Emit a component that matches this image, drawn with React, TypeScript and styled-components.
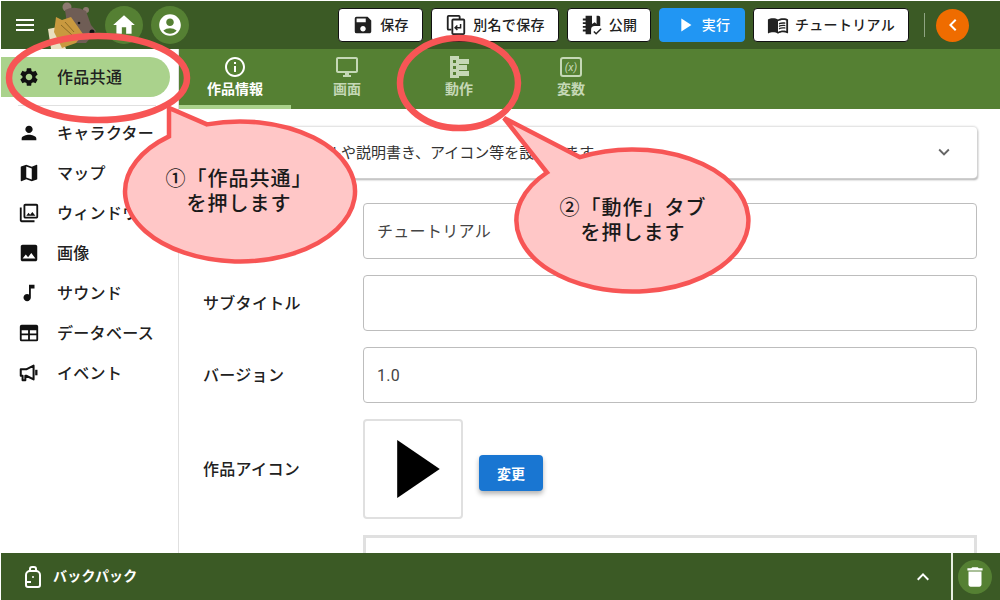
import React from 'react'
import styled, { createGlobalStyle } from 'styled-components'
import {
  MdMenu, MdHome, MdAccountCircle, MdSave, MdSettings, MdPerson, MdMap, MdOutlinePhotoLibrary, MdImage,
  MdMusicNote, MdInfoOutline, MdOutlineDesktopWindows, MdPlayArrow, MdMenuBook, MdChevronLeft,
  MdExpandMore, MdExpandLess, MdDelete,
} from 'react-icons/md'

const GlobalStyle = createGlobalStyle`
  html, body {
    margin: 0;
    background: #fff;
  }
  * {
    box-sizing: border-box;
  }
  body {
    font-family: Roboto, "Noto Sans CJK JP", sans-serif;
    color: #212121;
    overflow: hidden;
  }
`

const Page = styled.div`
  position: relative;
  width: 1000px;
  height: 600px;
  padding: 1px 0 0 1px;
  display: flex;
  flex-direction: column;
  overflow: hidden;
`

const Header = styled.header`
  flex: 0 0 48px;
  background: #3b5a25;
  display: flex;
  align-items: center;
  padding: 0 31px 0 12px;
`

const MenuButton = styled.div`
  display: flex;
  color: #fff;
  font-size: 24px;
  margin-right: 11px;
`

const Logo = styled.svg`
  width: 48px;
  height: 48px;
  margin-right: 9px;
  align-self: flex-end;
`

const RoundButton = styled.div`
  width: 38px;
  height: 38px;
  border-radius: 50%;
  background: #558033;
  color: #fff;
  font-size: 26px;
  display: flex;
  align-items: center;
  justify-content: center;
  margin-right: 8px;
`

const Spacer = styled.div`
  flex: 1;
`

const ToolButton = styled.div<{ $width: number; $primary?: boolean }>`
  width: ${p => p.$width}px;
  height: 34px;
  margin-left: 8px;
  border-radius: 4px;
  border: 1px solid ${p => (p.$primary ? '#2196f3' : '#111')};
  background: ${p => (p.$primary ? '#2196f3' : '#fff')};
  color: ${p => (p.$primary ? '#fff' : '#212121')};
  font-size: 14px;
  font-weight: 500;
  letter-spacing: 0.3px;
  line-height: 18px;
  padding-bottom: 1px;
  display: flex;
  align-items: center;
  justify-content: center;
  gap: 6px;
  white-space: nowrap;

  svg {
    width: 22px;
    height: 22px;
    flex: none;
  }
`

const HeaderDivider = styled.div`
  width: 1px;
  height: 24px;
  background: #8fa582;
  margin: 0 11px 0 15px;
`

const CollapseButton = styled.div`
  width: 33px;
  height: 33px;
  border-radius: 50%;
  background: #ef6c00;
  color: #fff;
  font-size: 24px;
  display: flex;
  align-items: center;
  justify-content: center;
`

const Body = styled.div`
  flex: 1;
  min-height: 0;
  display: flex;
`

const Sidebar = styled.nav`
  flex: 0 0 178px;
  border-right: 1px solid #e0e0e0;
  padding-top: 8px;
`

const NavItem = styled.div<{ $active?: boolean }>`
  width: 169px;
  height: 40px;
  display: flex;
  align-items: center;
  padding: 0 0 2px 17px;
  border-radius: 0 20px 20px 0;
  background: ${p => (p.$active ? '#aad28c' : 'transparent')};
  font-size: 16px;
  font-weight: 500;
  letter-spacing: 0.3px;
  white-space: nowrap;

  svg {
    width: 22px;
    height: 22px;
    color: #111;
    flex: none;
    margin: 2px 17px 0 0;
  }
`

const NavDivider = styled.hr`
  width: 138px;
  margin: 8px 0 7px 17px;
  border: 0;
  border-top: 1px solid #e0e0e0;
`

const Content = styled.main`
  flex: 1;
  min-width: 0;
  overflow: hidden;
`

const TabBar = styled.div`
  height: 60px;
  background: #558033;
  display: flex;
`

const Tab = styled.div<{ $active?: boolean }>`
  width: 112px;
  height: 60px;
  display: flex;
  flex-direction: column;
  align-items: center;
  padding-top: 6px;
  color: ${p => (p.$active ? '#fff' : '#c5d8b6')};
  border-bottom: 4px solid ${p => (p.$active ? '#aad28c' : 'transparent')};
  font-size: 14px;
  font-weight: 700;
  line-height: 18px;

  svg {
    width: 24px;
    height: 24px;
    margin-bottom: 1px;
  }
`

const Form = styled.div`
  padding: 18px 23px 0 11px;
`

const Accordion = styled.div`
  height: 51px;
  border-radius: 4px;
  background: #fff;
  box-shadow: 0 0 2px 1px #dcdcdc, 1px 2px 2px #a8a8a8;
  display: flex;
  align-items: center;
  justify-content: space-between;
  padding: 0 22px 2px 46px;
  font-size: 15px;
  color: #333;
  margin-bottom: 25px;

  svg {
    font-size: 22px;
    color: #666;
  }
`

const FieldRow = styled.div`
  display: flex;
  align-items: center;
  margin-bottom: 16px;
`

const FieldLabel = styled.div`
  flex: 0 0 173px;
  padding: 0 0 3px 13px;
  font-size: 16px;
  font-weight: 500;
  letter-spacing: 0.3px;
  white-space: nowrap;
`

const TextField = styled.div<{ $latin?: boolean }>`
  flex: 1;
  height: 56px;
  border: 1px solid #bdbdbd;
  border-radius: 4px;
  padding: 0 13px ${p => (p.$latin ? '0' : '3px')};
  display: flex;
  align-items: center;
  font-size: 16px;
  letter-spacing: 0.3px;
  color: #444;
`

const IconBox = styled.div`
  width: 100px;
  height: 100px;
  border: 2px solid #e0e0e0;
  border-radius: 4px;
  display: flex;
  align-items: center;
  justify-content: center;
  margin-right: 16px;
  padding-left: 10px;

  svg {
    width: 46px;
    height: 58px;
  }
`

const ChangeButton = styled.div`
  width: 64px;
  height: 36px;
  margin-top: 8px;
  border-radius: 4px;
  background: #1976d2;
  color: #fff;
  font-size: 14px;
  font-weight: 700;
  display: flex;
  align-items: center;
  justify-content: center;
  box-shadow: 0 3px 5px rgba(0, 0, 0, 0.3);
`

const LowerBox = styled.div`
  margin-left: 173px;
  height: 60px;
  border: 3px solid #e0e0e0;
`

const Footer = styled.footer`
  flex: 0 0 47px;
  background: #3b5a25;
  display: flex;
  align-items: center;
  color: #fff;
  padding-left: 20px;
`

const FooterIcon = styled.svg`
  width: 24px;
  height: 24px;
  margin-right: 8px;
`

const FooterLabel = styled.span`
  font-size: 14px;
  letter-spacing: 0.2px;
  font-weight: 700;
  padding-bottom: 3px;
`

const FooterToggle = styled.div`
  display: flex;
  font-size: 24px;
  margin-right: 16px;
`

const FooterDivider = styled.div`
  width: 2px;
  height: 47px;
  background: #e8efe2;
`

const TrashSlot = styled.div`
  width: 47px;
  display: flex;
  padding-left: 5px;
`

const TrashButton = styled.div`
  width: 34px;
  height: 34px;
  border-radius: 50%;
  background: #558033;
  font-size: 26px;
  display: flex;
  align-items: center;
  justify-content: center;
`

const Annotations = styled.svg`
  position: absolute;
  left: 0;
  top: 0;
  width: 1000px;
  height: 600px;
  pointer-events: none;
`

const Callout = styled.div<{ $x: number; $y: number }>`
  position: absolute;
  left: ${p => p.$x}px;
  top: ${p => p.$y}px;
  width: 220px;
  transform: translateX(-50%);
  text-align: center;
  font-size: 20px;
  line-height: 25px;
  font-weight: 500;
  letter-spacing: 1px;
  color: #1a1a1a;
  white-space: nowrap;
`

const SaveAsIcon = () => (
  <svg viewBox="0 0 24 24" fill="none" stroke="currentColor" strokeWidth="2">
    <path d="M7 17H4a1 1 0 0 1-1-1V3a1 1 0 0 1 1-1h11a1 1 0 0 1 1 1v3" />
    <path d="M9 6h11a1 1 0 0 1 1 1v14a1 1 0 0 1-1 1H9a1 1 0 0 1-1-1V7a1 1 0 0 1 1-1z" />
    <path d="M17 11v4h-6M13.500 12.500 11 15l2.500 2.500" strokeWidth="1.600" />
  </svg>
)

const PublishIcon = () => (
  <svg viewBox="0 0 24 24" fill="currentColor">
    <path d="M5 2h7v9l3-2 2 2V2h2a2 2 0 0 1 2 2v9h-6a4 4 0 0 0-4 4v5H5z" />
    <path d="M2 5h4v2H2zM2 9h4v2H2zM2 13h4v2H2zM2 17h4v2H2z" />
    <path d="m14 19 2.500 2.500L22 16" fill="none" stroke="currentColor" strokeWidth="1.600" />
  </svg>
)

const ActionIcon = () => (
  <svg viewBox="0 0 24 24" fill="currentColor">
    <path d="M3 1h9v3h10v5H12v1h8v5h-8v1h10v5H12v2H3zM6 5v3h3V5zm0 6v3h3v-3zm0 6v3h3v-3z" fillRule="evenodd" />
  </svg>
)

const VariableIcon = () => (
  <svg viewBox="0 0 24 24">
    <rect x="2" y="3" width="20" height="18" rx="2" fill="none" stroke="currentColor" strokeWidth="2" />
    <text x="12" y="16" textAnchor="middle" fontSize="11" fontStyle="italic" fontWeight="400" fill="currentColor" fontFamily="Roboto, sans-serif">(x)</text>
  </svg>
)

const TableIcon = () => (
  <svg viewBox="0 0 24 24" fill="currentColor">
    <path d="M4 3h16a2 2 0 0 1 2 2v14a2 2 0 0 1-2 2H4a2 2 0 0 1-2-2V5a2 2 0 0 1 2-2zm0 6v3.500h7V9zm9 0v3.500h7V9zm-9 5.500V19h7v-4.500zm9 0V19h7v-4.500z" fillRule="evenodd" />
  </svg>
)

const MegaphoneIcon = () => (
  <svg viewBox="0 0 24 24" fill="none" stroke="currentColor" strokeWidth="2.200">
    <path d="M3 8h6l8-4v15l-8-4H8v5H5v-5H3z" strokeLinejoin="round" />
    <path d="M20 8.500v6" strokeWidth="2.500" />
  </svg>
)

const navItems = [
  { icon: <MdPerson />, label: 'キャラクター' },
  { icon: <MdMap />, label: 'マップ' },
  { icon: <MdOutlinePhotoLibrary />, label: 'ウィンドウ' },
  { icon: <MdImage />, label: '画像' },
  { icon: <MdMusicNote />, label: 'サウンド' },
  { icon: <TableIcon />, label: 'データベース' },
  { icon: <MegaphoneIcon />, label: 'イベント' },
]

const App = () => {
  return (
    <Page>
      <GlobalStyle />
      <Header>
        <MenuButton><MdMenu /></MenuButton>
        <Logo viewBox="0 0 48 48">
          <path d="M0 28l10-2 8 22H3z" fill="#e9dfc0" />
          <circle cx="19" cy="6" r="4.500" fill="#8d7a70" />
          <circle cx="38" cy="9" r="3" fill="#8d7a70" />
          <path d="M17 9q10-5 21 1l5 14 5 6-4 5-6 7H22z" fill="#6f5d55" />
          <circle cx="44" cy="31" r="2.500" fill="#111" />
          <circle cx="31" cy="22" r="1.300" fill="#111" />
          <path d="M8 16l6 3 9-3 12 17-7 9-14 5-8-16z" fill="#c9993f" />
          <path d="M13 24l11 10M17 21l9 10" stroke="#8b6a25" strokeWidth="1" fill="none" />
        </Logo>
        <RoundButton><MdHome /></RoundButton>
        <RoundButton><MdAccountCircle /></RoundButton>
        <Spacer />
        <ToolButton $width={85}><MdSave />保存</ToolButton>
        <ToolButton $width={128}><SaveAsIcon />別名で保存</ToolButton>
        <ToolButton $width={84}><PublishIcon />公開</ToolButton>
        <ToolButton $width={86} $primary><MdPlayArrow />実行</ToolButton>
        <ToolButton $width={156}><MdMenuBook />チュートリアル</ToolButton>
        <HeaderDivider />
        <CollapseButton><MdChevronLeft /></CollapseButton>
      </Header>
      <Body>
        <Sidebar>
          <NavItem $active><MdSettings />作品共通</NavItem>
          <NavDivider />
          {navItems.map(item => (
            <NavItem key={item.label}>{item.icon}{item.label}</NavItem>
          ))}
        </Sidebar>
        <Content>
          <TabBar>
            <Tab $active><MdInfoOutline />作品情報</Tab>
            <Tab><MdOutlineDesktopWindows />画面</Tab>
            <Tab><ActionIcon />動作</Tab>
            <Tab><VariableIcon />変数</Tab>
          </TabBar>
          <Form>
            <Accordion>
              作品のタイトルや説明書き、アイコン等を設定します
              <MdExpandMore />
            </Accordion>
            <FieldRow>
              <FieldLabel>ゲームのタイトル</FieldLabel>
              <TextField>チュートリアル</TextField>
            </FieldRow>
            <FieldRow>
              <FieldLabel>サブタイトル</FieldLabel>
              <TextField />
            </FieldRow>
            <FieldRow>
              <FieldLabel>バージョン</FieldLabel>
              <TextField $latin>1.0</TextField>
            </FieldRow>
            <FieldRow>
              <FieldLabel>作品アイコン</FieldLabel>
              <IconBox>
                <svg viewBox="0 0 45 60"><path d="M1 0 45 30 1 60z" fill="#000" /></svg>
              </IconBox>
              <ChangeButton>変更</ChangeButton>
            </FieldRow>
            <LowerBox />
          </Form>
        </Content>
      </Body>
      <Footer>
        <FooterIcon viewBox="0 0 24 24" fill="none" stroke="currentColor" strokeWidth="2">
          <path d="M5 10a4 4 0 0 1 4-4h6a4 4 0 0 1 4 4v10a2 2 0 0 1-2 2H7a2 2 0 0 1-2-2z" />
          <path d="M9 6V4a2 2 0 0 1 2-2h2a2 2 0 0 1 2 2v2M5 17h5" />
          <circle cx="12" cy="12" r="1" fill="currentColor" stroke="none" />
        </FooterIcon>
        <FooterLabel>バックパック</FooterLabel>
        <Spacer />
        <FooterToggle><MdExpandLess /></FooterToggle>
        <FooterDivider />
        <TrashSlot><TrashButton><MdDelete /></TrashButton></TrashSlot>
      </Footer>
      <Annotations viewBox="0 0 1000 600">
        <g fill="none" stroke="#f75555" strokeWidth="6.500">
          <ellipse cx="98" cy="78" rx="89" ry="42" />
          <ellipse cx="459" cy="83" rx="59" ry="45" />
        </g>
        <g fill="#ffc7c7" stroke="#f75555" strokeWidth="4.500" strokeLinejoin="miter">
          <path d="M207 124.400 169 108 169 136.400A115 70 0 1 0 207 124.400z" />
          <path d="M580 157.200 504 118 547 172.500A116 71 0 1 0 580 157.200z" />
        </g>
      </Annotations>
      <Callout $x={239} $y={167}>①「作品共通」<br />を押します</Callout>
      <Callout $x={633} $y={196}>②「動作」タブ<br />を押します</Callout>
    </Page>
  )
}

export default App
